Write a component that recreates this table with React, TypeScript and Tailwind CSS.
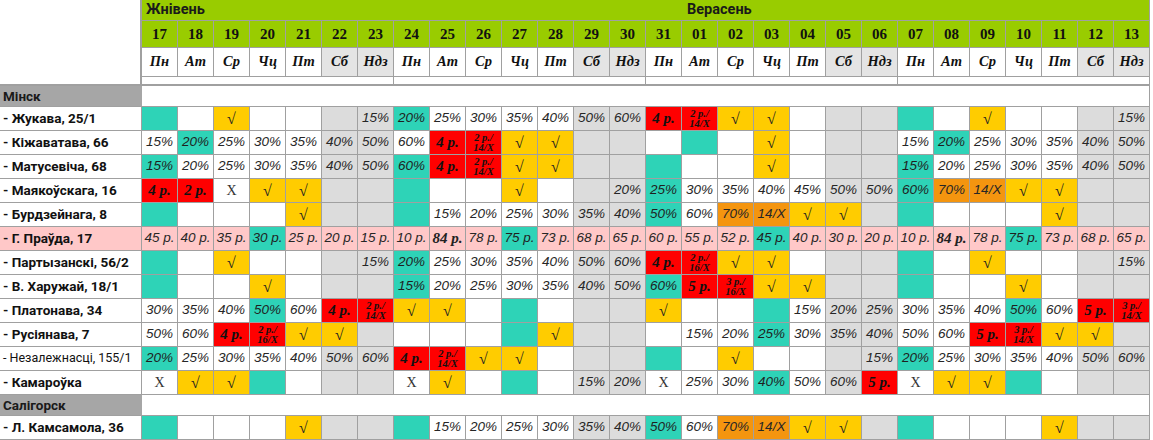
import React from "react";

const DAYS = ["17","18","19","20","21","22","23","24","25","26","27","28","29","30","31","01","02","03","04","05","06","07","08","09","10","11","12","13"];
const WD = ["Пн","Ат","Ср","Чц","Пт","Сб","Ндз"];
const WEEKEND = new Set([5,6,12,13,19,20,26,27]);

const BURDZ = "t,.,.,.,v,.,.,t,p15%,p20%,p25%,p30%,p35%,p40%,t50%,p60%,o70%,o14/X,v,v,.,t,.,.,.,v,.,.";

type Row = { label: string; data: string; pink?: boolean; thin?: boolean } | { cat: string };

const ROWS: Row[] = [
  { cat: "Мінск" },
  { label: "- Жукава, 25/1", data: "t,.,v,.,.,.,p15%,t20%,p25%,p30%,p35%,p40%,p50%,p60%,r4,s2/14,v,v,.,.,.,t,.,v,.,.,.,p15%" },
  { label: "- Кіжаватава, 66", data: "p15%,t20%,p25%,p30%,p35%,p40%,p50%,p60%,r4,s2/14,v,v,.,.,.,t,.,v,.,.,.,p15%,t20%,p25%,p30%,p35%,p40%,p50%" },
  { label: "- Матусевіча, 68", data: "t15%,p20%,p25%,p30%,p35%,p40%,p50%,t60%,r4,s2/14,v,v,.,.,t,.,.,v,.,.,.,t15%,p20%,p25%,p30%,p35%,p40%,p50%" },
  { label: "- Маякоўскага, 16", data: "r4,r2,x,v,v,.,.,t,.,.,v,.,.,p20%,t25%,p30%,p35%,p40%,p45%,p50%,p50%,t60%,o70%,o14/X,v,v,.,." },
  { label: "- Бурдзейнага, 8", data: BURDZ },
  { label: "- Г. Праўда, 17", pink: true, data: "p45 р.,p40 р.,p35 р.,t30 р.,p25 р.,p20 р.,p15 р.,p10 р.,b84 р.,p78 р.,t75 р.,p73 р.,p68 р.,p65 р.,p60 р.,p55 р.,p52 р.,t45 р.,p40 р.,p30 р.,p20 р.,p10 р.,b84 р.,p78 р.,t75 р.,p73 р.,p68 р.,p65 р." },
  { label: "- Партызанскі, 56/2", data: "t,.,v,.,.,.,p15%,t20%,p25%,p30%,p35%,p40%,p50%,p60%,r4,s2/16,v,v,.,.,.,t,.,v,.,.,.,p15%" },
  { label: "- В. Харужай, 18/1", data: "t,.,.,v,.,.,.,t15%,p20%,p25%,p30%,p35%,p40%,p50%,t60%,r5,s3/16,v,v,.,.,t,.,.,v,.,.,." },
  { label: "- Платонава, 34", data: "p30%,p35%,p40%,t50%,p60%,r4,s2/14,v,v,.,t,.,.,.,v,.,.,t,p15%,p20%,p25%,p30%,p35%,p40%,t50%,p60%,r5,s3/14" },
  { label: "- Русіянава, 7", data: "p50%,p60%,r4,s2/16,v,v,.,.,.,.,t,v,.,.,.,p15%,p20%,t25%,p30%,p35%,p40%,p50%,p60%,r5,s3/14,v,v,." },
  { label: "- Незалежнасці, 155/1", thin: true, data: "t20%,p25%,p30%,p35%,p40%,p50%,p60%,r4,s2/14,v,v,.,.,.,t,.,v,.,.,.,p15%,t20%,p25%,p30%,p35%,p40%,p50%,p60%" },
  { label: "- Камароўка", data: "x,v,v,t,.,.,.,x,v,.,t,.,p15%,p20%,x,p25%,p30%,t40%,p50%,p60%,r5,x,v,v,t,.,.,." },
  { cat: "Салігорск" },
  { label: "- Л. Камсамола, 36", data: BURDZ },
];

const SANS = "font-['Liberation_Sans',Arial,sans-serif]";
const SERIF = "font-['Liberation_Serif','Times_New_Roman',serif]";
const LABEL = "font-['Roboto','Noto_Sans',sans-serif]";

function Cell({ tok, col, pink }: { tok: string; col: number; pink?: boolean }) {
  const weekend = WEEKEND.has(col);
  const base = pink ? "bg-[#ffc8c8]" : weekend ? "bg-[#dcdcdc]" : "bg-white";
  const k = tok[0];
  const rest = tok.slice(1);
  const box = "w-[36px] h-full shrink-0 border-r border-b border-[#a0a0a0] flex items-center justify-center";
  if (k === ".") return <div className={`${box} ${base}`} />;
  if (k === "t")
    return (
      <div className={`${box} bg-[#2ed3b7] ${SANS} italic text-[13.5px] text-[#1f1f1f] whitespace-nowrap`}>{rest}</div>
    );
  if (k === "p")
    return <div className={`${box} ${base} ${SANS} italic text-[13.5px] text-[#262626] whitespace-nowrap`}>{rest}</div>;
  if (k === "o")
    return <div className={`${box} bg-[#f4950f] ${SANS} italic text-[13.5px] text-[#262626] whitespace-nowrap`}>{rest}</div>;
  if (k === "b")
    return <div className={`${box} ${base} ${SERIF} italic font-bold text-[15px] text-[#222] whitespace-nowrap`}>{rest}</div>;
  if (k === "v")
    return <div className={`${box} bg-[#ffcc00] ${SERIF} text-[16px] text-[#222]`}>√</div>;
  if (k === "x")
    return <div className={`${box} ${base} ${SERIF} text-[14px] text-[#333]`}>X</div>;
  if (k === "r")
    return (
      <div className={`${box} bg-[#ff0000] ${SERIF} italic font-bold text-[15px] text-[#111] whitespace-nowrap`}>{rest} р.</div>
    );
  const [a, b] = rest.split("/");
  return (
    <div className={`${box} bg-[#ff0000] ${SERIF} italic font-bold text-[10.5px] leading-[10px] text-[#111] flex-col`}>
      <span className="whitespace-nowrap">{a} р./</span>
      <span className="whitespace-nowrap">{b}/X</span>
    </div>
  );
}

export default function App() {
  return (
    <div className="w-[1153px] h-[440px] bg-white overflow-hidden">
      <div className="flex h-[21px]">
        <div className="w-[142px] shrink-0 border-r-2 border-[#a0a0a0]" />
        <div className={`flex w-[1008px] bg-[#99cc00] border-b border-r border-[#a0a0a0] ${LABEL} font-bold text-[14.5px] text-[#1a1a1a] items-center`}>
          <div className="w-[540px] pl-[4px]">Жнівень</div>
          <div className="pl-[5px]">Верасень</div>
        </div>
      </div>
      <div className="flex h-[27px]">
        <div className="w-[142px] shrink-0 border-r-2 border-[#a0a0a0]" />
        <div className="flex">
          {DAYS.map((d, i) => (
            <div
              key={i}
              className={`w-[36px] h-full border-r border-b border-[#a0a0a0] bg-[#99cc00] flex items-center justify-center ${SERIF} font-bold text-[15px] text-[#111]`}
            >
              {d}
            </div>
          ))}
        </div>
      </div>
      <div className="flex h-[29px]">
        <div className="w-[142px] shrink-0 border-r-2 border-[#a0a0a0]" />
        <div className="flex">
          {DAYS.map((_, i) => (
            <div
              key={i}
              className={`w-[36px] h-full border-r border-b border-[#a0a0a0] flex items-center justify-center ${SERIF} italic font-bold text-[14.5px] text-[#111] ${
                WEEKEND.has(i) ? "bg-[#e4e4e4]" : "bg-white"
              }`}
            >
              {WD[i % 7]}
            </div>
          ))}
        </div>
      </div>
      <div className="flex h-[7px]">
        <div className="w-[142px] shrink-0 border-r-2 border-[#a0a0a0]" />
        <div className="flex">
          {[0, 1, 2, 3].map((w) => (
            <div key={w} className="w-[252px] h-full border-r border-[#a0a0a0] bg-white" />
          ))}
        </div>
      </div>
      <div className="w-[1150px] h-[2px] bg-[#a0a0a0]" />
      {ROWS.map((r, idx) =>
        "cat" in r ? (
          <div key={idx} className="flex h-[21px] w-[1150px] border-b border-[#a0a0a0]">
            <div className={`w-[142px] shrink-0 bg-[#a6a6a6] pl-[3px] flex items-center ${LABEL} font-bold text-[13.5px] text-[#1a1a1a]`}>
              {r.cat}
            </div>
            <div className="flex-1 bg-white border-r border-[#a0a0a0]" />
          </div>
        ) : (
          <div key={idx} className="flex h-[24px]">
            <div
              className={`w-[142px] shrink-0 border-r border-b border-[#a0a0a0] pl-[3px] flex items-center whitespace-nowrap ${LABEL} ${
                r.thin ? "font-normal text-[12.5px]" : "font-bold text-[13.5px]"
              } text-[#111] ${r.pink ? "bg-[#ffc8c8]" : "bg-white"}`}
            >
              {r.label}
            </div>
            {r.data.split(",").map((tok, i) => (
              <Cell key={i} tok={tok} col={i} pink={r.pink} />
            ))}
          </div>
        )
      )}
    </div>
  );
}
